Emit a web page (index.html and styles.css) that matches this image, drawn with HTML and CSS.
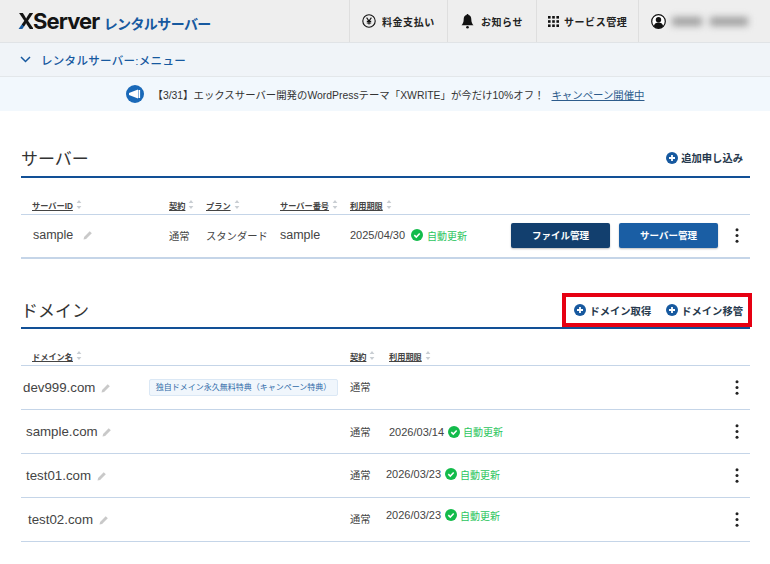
FILE: index.html
```html
<!DOCTYPE html>
<html lang="ja">
<head>
  <meta charset="UTF-8" />
  <title>XServer レンタルサーバー</title>
  <link rel="stylesheet" href="styles.css">
</head>
<body>
<svg class="sprite" xmlns="http://www.w3.org/2000/svg">
  <symbol id="i-plus" viewBox="0 0 12 12"><circle cx="6" cy="6" r="6" fill="#17599f"/><path d="M6 3v6M3 6h6" stroke="#fff" stroke-width="1.8"/></symbol>
  <symbol id="i-check" viewBox="0 0 12 12"><circle cx="6" cy="6" r="6" fill="#12bb4b"/><path d="M3.3 6.1l2 2 3.4-3.6" fill="none" stroke="#fff" stroke-width="1.5"/></symbol>
  <symbol id="i-pen" viewBox="0 0 10 10"><path d="M0.5 9.5l.6-2.6 5.6-5.7 2.1 2.1-5.7 5.6z" fill="#c9c9c9"/></symbol>
  <symbol id="i-sort" viewBox="0 0 6 9"><path d="M3 0l2.4 3H.6zM3 9L.6 6h4.8z" fill="#c9ced3"/></symbol>
  <symbol id="i-more" viewBox="0 0 4 15"><circle cx="2" cy="1.700" r="1.500" fill="#222"/><circle cx="2" cy="7.500" r="1.500" fill="#222"/><circle cx="2" cy="13.300" r="1.500" fill="#222"/></symbol>
</svg>

<header class="topbar">
  <div class="logo"><span class="logo-x">X</span>Server <span class="logo-sub">レンタルサーバー</span></div>
  <nav class="topnav">
    <a class="nav-item nav-pay">
      <svg width="14" height="14" viewBox="0 0 14 14"><circle cx="7" cy="7" r="6.2" fill="none" stroke="#111" stroke-width="1.1"/><path d="M4.6 3.600L7 7l2.400-3.400M7 7v3.600M4.800 7.400h4.400M4.800 9h4.400" fill="none" stroke="#111" stroke-width="1.1"/></svg>
      料金支払い
    </a>
    <a class="nav-item nav-info">
      <svg width="13" height="16" viewBox="0 0 13 16"><path d="M6.500 1c.6 0 1 .4 1 .9 2 .5 2.800 2.200 2.800 4.300 0 3 .9 4.600 2.200 6H.5c1.300-1.400 2.200-3 2.200-6 0-2.100.8-3.800 2.800-4.300 0-.5.4-.9 1-.9z" fill="#111"/><circle cx="6.500" cy="14.300" r="1.300" fill="#111"/></svg>
      お知らせ
    </a>
    <a class="nav-item nav-service">
      <svg width="11" height="11" viewBox="0 0 11 11" fill="#111"><rect width="2.600" height="2.600"/><rect x="4.200" width="2.600" height="2.600"/><rect x="8.400" width="2.600" height="2.600"/><rect y="4.200" width="2.600" height="2.600"/><rect x="4.200" y="4.200" width="2.600" height="2.600"/><rect x="8.400" y="4.200" width="2.600" height="2.600"/><rect y="8.400" width="2.600" height="2.600"/><rect x="4.200" y="8.400" width="2.600" height="2.600"/><rect x="8.400" y="8.400" width="2.600" height="2.600"/></svg>
      サービス管理
    </a>
    <a class="nav-item nav-user">
      <svg width="15" height="15" viewBox="0 0 15 15"><circle cx="7.500" cy="7.500" r="6.800" fill="#fff" stroke="#111" stroke-width="1.200"/><circle cx="7.500" cy="5.800" r="2.700" fill="#111"/><path d="M2.800 12.200c.6-2.500 2.400-3.600 4.700-3.600s4.100 1.100 4.700 3.600a6.600 6.600 0 0 1-9.400 0z" fill="#111"/></svg>
      <span class="user-name"><i></i><i></i></span>
    </a>
  </nav>
</header>

<div class="menubar">
  <svg width="11" height="7" viewBox="0 0 11 7"><path d="M1 1l4.500 4.500L10 1" fill="none" stroke="#17599f" stroke-width="1.500"/></svg>
  レンタルサーバー:メニュー
</div>

<div class="notice">
  <svg width="18" height="18" viewBox="0 0 18 18"><circle cx="9" cy="9" r="9" fill="#1a69b8"/><path d="M3 8l9-3.500v9L3 10z" fill="#fff"/><rect x="12.500" y="5" width="1.600" height="8" fill="#fff"/></svg>
  <span>【3/31】エックスサーバー開発のWordPressテーマ「XWRITE」が今だけ10%オフ！</span>
  <a class="notice-link">キャンペーン開催中</a>
</div>

<main class="content">
  <section class="server">
    <div class="section-head">
      <h2>サーバー</h2>
      <div class="actions">
        <a class="add"><svg width="12" height="12"><use href="#i-plus"/></svg>追加申し込み</a>
      </div>
    </div>
    <div class="server-row table-head">
      <span><u>サーバーID</u><svg class="sort"><use href="#i-sort"/></svg></span>
      <span><u>契約</u><svg class="sort"><use href="#i-sort"/></svg></span>
      <span><u>プラン</u><svg class="sort"><use href="#i-sort"/></svg></span>
      <span><u>サーバー番号</u><svg class="sort"><use href="#i-sort"/></svg></span>
      <span><u>利用期限</u><svg class="sort"><use href="#i-sort"/></svg></span>
    </div>
    <div class="server-row table-row">
      <span class="name">sample<svg class="pen server-pen"><use href="#i-pen"/></svg></span>
      <span class="cell">通常</span>
      <span class="cell">スタンダード</span>
      <span class="name-sm">sample</span>
      <span class="cell date">2025/04/30<svg class="ok"><use href="#i-check"/></svg><em>自動更新</em></span>
      <span class="buttons"><a class="btn btn-dark">ファイル管理</a><a class="btn btn-blue">サーバー管理</a></span>
      <svg class="more"><use href="#i-more"/></svg>
    </div>
  </section>

  <section class="domain">
    <div class="section-head">
      <h2>ドメイン</h2>
      <div class="actions actions-marked">
        <a class="add"><svg width="12" height="12"><use href="#i-plus"/></svg>ドメイン取得</a>
        <a class="add"><svg width="12" height="12"><use href="#i-plus"/></svg>ドメイン移管</a>
      </div>
    </div>
    <div class="domain-row table-head">
      <span class="head-name"><u>ドメイン名</u><svg class="sort"><use href="#i-sort"/></svg></span>
      <span></span>
      <span><u>契約</u><svg class="sort"><use href="#i-sort"/></svg></span>
      <span><u>利用期限</u><svg class="sort"><use href="#i-sort"/></svg></span>
    </div>
    <div class="domain-row table-row">
      <span class="name">dev999.com<svg class="pen"><use href="#i-pen"/></svg></span>
      <span class="campaign">独自ドメイン永久無料特典（キャンペーン特典）</span>
      <span class="cell lift-1">通常</span>
      <span></span>
      <svg class="more"><use href="#i-more"/></svg>
    </div>
    <div class="domain-row table-row">
      <span class="name shift-3">sample.com<svg class="pen pen-near"><use href="#i-pen"/></svg></span>
      <span></span>
      <span class="cell">通常</span>
      <span class="cell date shift-3">2026/03/14<svg class="ok"><use href="#i-check"/></svg><em>自動更新</em></span>
      <svg class="more"><use href="#i-more"/></svg>
    </div>
    <div class="domain-row table-row">
      <span class="name shift-3">test01.com<svg class="pen"><use href="#i-pen"/></svg></span>
      <span></span>
      <span class="cell lift-2">通常</span>
      <span class="cell date lift-2">2026/03/23<svg class="ok"><use href="#i-check"/></svg><em>自動更新</em></span>
      <svg class="more lift-2"><use href="#i-more"/></svg>
    </div>
    <div class="domain-row table-row">
      <span class="name shift-5">test02.com<svg class="pen"><use href="#i-pen"/></svg></span>
      <span></span>
      <span class="cell lift-2">通常</span>
      <span class="cell date lift-6">2026/03/23<svg class="ok"><use href="#i-check"/></svg><em>自動更新</em></span>
      <svg class="more lift-2"><use href="#i-more"/></svg>
    </div>
  </section>
</main>
</body>
</html>
```

FILE: styles.css
```css
body { margin:0; background:#fff; color:#333; font-family:"Liberation Sans","Noto Sans CJK JP",sans-serif; overflow:hidden; }
.sprite { display:none; }
a { color:inherit; text-decoration:none; }

/* Top bar */
.topbar { display:flex; justify-content:space-between; height:42px; background:#eeeeee; border-bottom:1px solid #e0e3e6; }
.logo { padding:0 0 0 18px; line-height:43px; font-family:"Inter","Liberation Sans",sans-serif; font-size:22px; font-weight:700; letter-spacing:-.9px; color:#141414; white-space:nowrap; }
.logo-x { background:linear-gradient(45deg,#17599f 32%,#141414 34%); -webkit-background-clip:text; background-clip:text; color:transparent; }
.logo-sub { font-family:"Noto Sans CJK JP",sans-serif; font-size:14px; letter-spacing:-.6px; color:#17599f; }
.topnav { display:flex; }
.nav-item { display:flex; align-items:center; gap:6px; padding-left:12px; border-left:1px solid #dedede; font-size:10px; font-weight:700; letter-spacing:.55px; color:#222; white-space:nowrap; box-sizing:border-box; }
.nav-pay { width:98px; }
.nav-info { width:89px; padding-left:13px; gap:7px; }
.nav-service { width:102px; gap:5px; padding-left:11px; }
.nav-user { width:132px; padding-left:12px; gap:6px; }
.user-name { display:flex; gap:8px; width:80px; filter:blur(3.5px); }
.user-name i { display:block; width:30px; height:9px; background:#a0a0a0; }
.user-name i + i { width:38px; }

/* Menu + notice */
.menubar { display:flex; align-items:center; gap:10px; height:33px; padding-left:20px; background:#f0f4f8; border-bottom:1px solid #e3e7ea; font-size:11.5px; font-weight:500; letter-spacing:.3px; color:#17599f; }
.notice { display:flex; align-items:center; justify-content:center; height:34px; background:#f2f8fd; font-size:10.4px; color:#333; }
.notice svg { margin-right:9px; }
.notice-link { margin-left:7px; color:#2d5c8c; text-decoration:underline; }

/* Sections */
.content { padding:0 20px 0 21px; }
.section-head { display:flex; justify-content:space-between; align-items:flex-end; border-bottom:2px solid #125096; }
.server .section-head { height:65px; }
.domain { margin-top:32px; }
.domain .section-head { height:36px; }
h2 { margin:0 0 3px; font-size:17px; font-weight:400; line-height:26px; color:#333; }
.domain h2 { margin-bottom:2px; }
.actions { display:flex; gap:15px; padding:0 7px 11px 0; }
.actions-marked { margin-right:-2px; padding:0 5px 0 8px; height:34px; align-items:center; border:4px solid #e60012; box-sizing:border-box; }
.add { display:flex; align-items:center; gap:3px; font-size:10.3px; font-weight:700; color:#26384c; }

/* Tables */
.server-row { display:grid; grid-template-columns:137px 37px 74px 70px 161px 216px 1fr; padding-left:11px; align-items:center; }
.domain-row { display:grid; grid-template-columns:128px 201px 39px 1fr 24px; align-items:center; }
.table-head { height:37px; box-sizing:border-box; padding-top:17px; border-bottom:1px solid #c5d5e8; font-size:8.2px; font-weight:700; color:#444; }
.table-head span { display:flex; align-items:center; gap:3px; }
.table-row { height:44px; box-sizing:border-box; border-bottom:1px solid #c5d5e8; font-size:10.3px; }
.server .table-row { border-bottom-width:2px; padding-bottom:2px; }
.head-name { padding-left:11px; }
.sort { width:6px; height:9px; }
.name { display:flex; align-items:center; font-size:13.3px; color:#444; padding-left:2px; }
.server .name { padding-left:1px; font-size:12.5px; }
.shift-3 { padding-left:5px; }
.shift-5 { padding-left:7px; }
.lift-1 { margin-bottom:2px; }
.lift-2 { margin-bottom:3px; }
.lift-6 { margin-bottom:9px; }
.name-sm { font-size:12.5px; color:#444; }
.pen { width:10px; height:10px; margin-left:6px; }
.pen-near { margin-left:4px; }
.server-pen { margin-left:10px; }
.cell { color:#444; }
.date { display:flex; align-items:center; font-size:11px; }
.date.shift-3 { padding-left:3px; }
.domain .date { margin-left:-3px; }
.ok { width:12px; height:12px; margin:0 3.500px 0 3.500px; }
.server .ok { margin:0 4px 0 6px; }
em { font-style:normal; color:#2cc560; font-size:10px; }
.campaign { display:block; box-sizing:border-box; width:189px; height:17px; line-height:15px; text-align:center; background:#f0f6fc; border:1px solid #dbe8f5; border-radius:2px; font-size:8px; color:#2f6aa8; white-space:nowrap; }
.buttons { display:flex; gap:9px; }
.btn { display:block; width:99px; height:25px; line-height:25px; text-align:center; border-radius:2px; color:#fff; font-size:9.5px; font-weight:700; box-shadow:0 1px 2px rgba(0,0,0,.25); }
.btn-dark { background:#123f6e; }
.btn-blue { background:#1a5ea4; }
.more { width:4px; height:15px; justify-self:start; margin-left:8px; }
.domain-row .more { justify-self:end; margin:0 11px 0 0; }
```
